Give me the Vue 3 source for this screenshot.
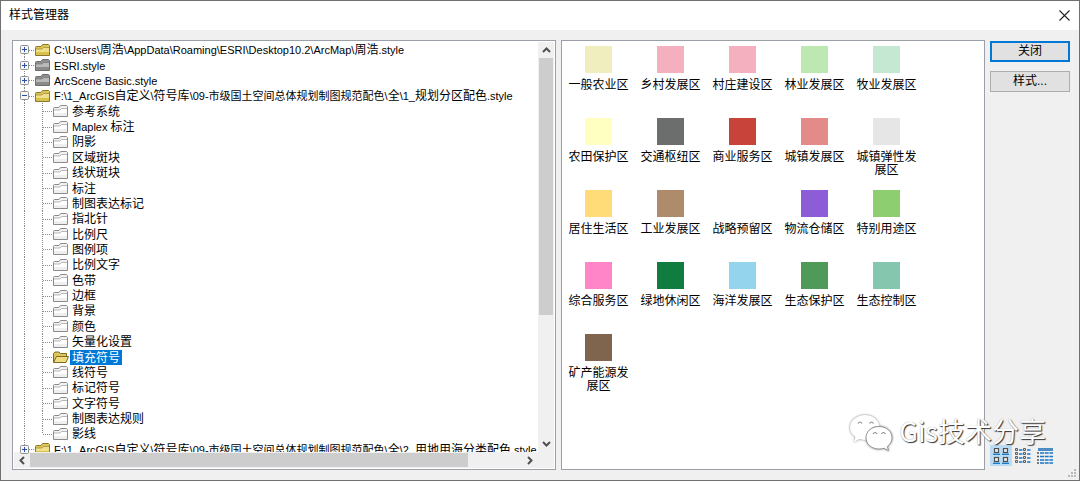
<script setup>
import { ref } from 'vue'

const roots = [
  { label: 'C:\\Users\\周浩\\AppData\\Roaming\\ESRI\\Desktop10.2\\ArcMap\\周浩.style', kind: 'gold' },
  { label: 'ESRI.style', kind: 'gray' },
  { label: 'ArcScene Basic.style', kind: 'gray' },
  { label: 'F:\\1_ArcGIS自定义\\符号库\\09-市级国土空间总体规划制图规范配色\\全\\1_规划分区配色.style', kind: 'gold', open: true },
]
const children = [
  '参考系统', 'Maplex 标注', '阴影', '区域斑块', '线状斑块', '标注', '制图表达标记', '指北针',
  '比例尺', '图例项', '比例文字', '色带', '边框', '背景', '颜色', '矢量化设置', '填充符号',
  '线符号', '标记符号', '文字符号', '制图表达规则', '影线',
]
const rows = [
  ...roots.map((r) => ({ ...r, level: 0 })),
  ...children.map((label) => ({ label, level: 1, kind: 'plain' })),
  { label: 'F:\\1_ArcGIS自定义\\符号库\\09-市级国土空间总体规划制图规范配色\\全\\2_用地用海分类配色.style', kind: 'gold', level: 0 },
]
const selected = ref('填充符号')

const folderColors = {
  gold: { line: '#8c7a2c', back: '#dcc65a', front: '#f1e08a', low: '#d9c04c' },
  gray: { line: '#6e6e6e', back: '#8f8f8f', front: '#b9b9b9', low: '#8a8a8a' },
  plain: { line: '#8b8b8b', back: '#f2f2f2', front: '#ffffff', low: '#efefef' },
}

// Latin runs and long Chinese runs are set one size smaller than short Chinese names.
const split = (text) => text.match(/[\u4e00-\u9fff]+|[^\u4e00-\u9fff]+/g)
const isSmall = (part) => !/[\u4e00-\u9fff]/.test(part) || part.length > 10

const symbols = [
  ['一般农业区', '#f0edbe'], ['乡村发展区', '#f4b0bf'], ['村庄建设区', '#f4b0bf'], ['林业发展区', '#bee8b2'], ['牧业发展区', '#c5e8d3'],
  ['农田保护区', '#ffffc2'], ['交通枢纽区', '#6c6e6d'], ['商业服务区', '#c8433a'], ['城镇发展区', '#e38b89'], ['城镇弹性发展区', '#e6e6e6'],
  ['居住生活区', '#ffdc78'], ['工业发展区', '#ae8c6b'], ['战略预留区', '#ffffff'], ['物流仓储区', '#8c5dd6'], ['特别用途区', '#8dce70'],
  ['综合服务区', '#ff85c8'], ['绿地休闲区', '#107c3f'], ['海洋发展区', '#94d4ec'], ['生态保护区', '#4f9a59'], ['生态控制区', '#84c6ae'],
  ['矿产能源发展区', '#7f654e'],
]
</script>

<template>
  <main class="window">
    <header class="titlebar">
      <h1>样式管理器</h1>
      <button class="close" aria-label="关闭窗口">
        <svg width="11" height="11" viewBox="0 0 11 11"><path d="M.5.5l10 10M10.5.5l-10 10" stroke="#222" stroke-width="1.1" /></svg>
      </button>
    </header>

    <div class="body">
      <section class="panel tree-panel">
        <ul class="tree" role="tree">
          <li
            v-for="(row, i) in rows"
            :key="i"
            class="row"
            :class="{ first: i === 0, end: i === rows.length - 1, lastchild: i === rows.length - 2, child: row.level === 1 }"
            role="treeitem"
            @click="selected = row.label"
          >
            <span class="rail">
              <button v-if="row.level === 0" class="toggle" :aria-label="row.open ? '折叠' : '展开'">
                <svg width="9" height="9" viewBox="0 0 9 9">
                  <rect x=".5" y=".5" width="8" height="8" rx="1" fill="#f6f6f6" stroke="#919191" />
                  <path :d="row.open ? 'M2 4.5h5' : 'M2 4.5h5M4.5 2v5'" stroke="#2a4fa8" />
                </svg>
              </button>
            </span>
            <span v-if="row.level === 1" class="rail inner"></span>
            <svg v-if="selected === row.label" class="folder" width="16" height="14" viewBox="0 0 16 14">
              <path d="M.5 12.500V3.500L2 2h4l1.500 1.500H13.500V6" fill="#dcc65a" stroke="#7d6b22" />
              <path d="M.5 12.500L3.500 6.500H15.500L13 12.500Z" fill="#efdc80" stroke="#7d6b22" />
            </svg>
            <svg v-else class="folder" width="16" height="14" viewBox="0 0 16 14">
              <path d="M.5 12.500V4.500Q.5 3.500 1.500 3.500H6L7.500 1.500H13.500L14.500 2.500V12.500Z" :fill="folderColors[row.kind].back" :stroke="folderColors[row.kind].line" />
              <path d="M1 6H7L8.500 4.500H14V9H1Z" :fill="folderColors[row.kind].front" />
              <path d="M1 9H14V12H1Z" :fill="folderColors[row.kind].low" />
              <path d="M1 6H7L8.500 4.500H14" fill="none" :stroke="folderColors[row.kind].line" stroke-width=".6" />
            </svg>
            <span class="label" :class="{ on: selected === row.label }"><span v-for="(part, k) in split(row.label)" :key="k" :class="{ small: isSmall(part) }">{{ part }}</span></span>
          </li>
        </ul>
        <div class="vbar">
          <button aria-label="向上滚动"><svg width="9" height="6" viewBox="0 0 9 6"><path d="M1 5l3.500-3.500L8 5" /></svg></button>
          <div class="track"><div class="thumb"></div></div>
          <button aria-label="向下滚动"><svg width="9" height="6" viewBox="0 0 9 6"><path d="M1 1l3.500 3.500L8 1" /></svg></button>
        </div>
        <div class="hbar">
          <button aria-label="向左滚动"><svg width="6" height="9" viewBox="0 0 6 9"><path d="M5 1L1.500 4.500L5 8" /></svg></button>
          <div class="track"><div class="thumb"></div></div>
          <button aria-label="向右滚动"><svg width="6" height="9" viewBox="0 0 6 9"><path d="M1 1l3.500 3.500L1 8" /></svg></button>
        </div>
      </section>

      <section class="panel symbols">
        <figure v-for="[name, color] in symbols" :key="name">
          <span class="swatch" :style="{ background: color }"></span>
          <figcaption>{{ name }}</figcaption>
        </figure>
      </section>

      <aside>
        <button class="btn primary">关闭</button>
        <button class="btn">样式...</button>
        <div class="views">
          <button class="view on" aria-label="大图标">
            <svg width="16" height="16" viewBox="0 0 16 16">
              <g v-for="p in [[1, 0], [10, 0], [1, 9], [10, 9]]" :key="p.join()" :transform="`translate(${p[0]} ${p[1]})`">
                <rect x=".5" y=".5" width="4" height="4" fill="#eee" stroke="#505050" stroke-width="1.200" />
                <path d="M-1 6.300h7" stroke="#1676c8" stroke-width="1.300" />
              </g>
            </svg>
          </button>
          <button class="view" aria-label="列表">
            <svg width="16" height="16" viewBox="0 0 16 16">
              <g v-for="y in [0, 4, 8, 12]" :key="y">
                <path :d="`M.500 ${y + .5}h2v2h-2zM8.500 ${y + .5}h2v2h-2z`" fill="#ddd" stroke="#5c5c5c" />
                <path :d="`M4 ${y + 2}h3.500M12 ${y + 2}h3.500`" stroke="#1676c8" stroke-width="1.300" />
              </g>
            </svg>
          </button>
          <button class="view" aria-label="详细信息">
            <svg width="16" height="16" viewBox="0 0 16 16">
              <path d="M1 1.500h15" stroke="#4b8cc4" stroke-width="3" />
              <path d="M0 5h2M0 8.500h2M0 12h2M0 15h2" stroke="#555" stroke-width="1.500" />
              <path d="M3 5h13M3 8.500h13M3 12h13M3 15h13" stroke="#1676c8" stroke-width="1.500" stroke-dasharray="4 .7" />
            </svg>
          </button>
        </div>
      </aside>
    </div>

    <svg class="grip" width="9" height="9" viewBox="0 0 9 9"><path d="M6 0h2v2h-2zM3 3h2v2h-2zM6 3h2v2h-2zM0 6h2v2h-2zM3 6h2v2h-2zM6 6h2v2h-2z" fill="#b8b8b8" /></svg>

    <div class="watermark">
      <svg width="44" height="38" viewBox="0 0 44 38">
        <path d="M16 1C7.500 1 1 6.800 1 13.500c0 4 2 7.200 5.300 9.500L5 28l5.500-3c2 .6 4 .9 6.200.9C16 18 22 12 30.500 12 29.500 5.500 23.500 1 16 1Z" fill="#fff" />
        <path d="M30 12.500c-7.500 0-13 5-13 11.200S22.500 35 30 35c1.800 0 3.400-.3 5-.8l4.500 2.500-1.200-4.200c3-2.200 4.700-5.200 4.700-8.800 0-6.200-5.500-11.200-13-11.200Z" fill="#fff" stroke="#888" stroke-width=".8" />
        <path d="M9 9.500q2-3 4 0M20.500 9.500q2-3 4 0M24 20q2-3 4 0M32.500 20q2-3 4 0" fill="none" stroke="#888" stroke-width="1.200" />
      </svg>
      <span>Gis技术分享</span>
    </div>
  </main>
</template>

<style>
body { margin: 0; }
</style>

<style scoped>
* { box-sizing: border-box; }
.window {
  position: relative;
  display: flex;
  flex-direction: column;
  height: 100vh;
  border: 1px solid #707070;
  background: #f0f0f0;
  color: #000;
  font: 12px/13px "Liberation Sans", "Noto Sans CJK SC", sans-serif;
}
button { padding: 0; border: 0; background: none; font: inherit; color: inherit; }
svg { display: block; flex: none; }
.titlebar {
  display: flex;
  align-items: center;
  justify-content: space-between;
  flex: none;
  height: 29px;
  padding: 0 9px 0 8px;
  background: #fff;
}
h1 { margin: 0; font-size: 12px; font-weight: 400; }
.body {
  flex: 1;
  min-height: 0;
  display: grid;
  grid-template-columns: 545fr 424fr 80px;
  gap: 5px;
  padding: 10px 9px 10px 11px;
}
.panel { min-width: 0; min-height: 0; border: 1px solid #9b9fa8; background: #fff; overflow: hidden; }
.tree-panel {
  display: grid;
  grid-template: "tree v" minmax(0, 1fr) "h h" 16px / minmax(0, 1fr) 16px;
  padding: 1px;
}
.tree {
  grid-area: tree;
  display: grid;
  grid-template-rows: repeat(27, 1fr);
  height: 415px;
  margin: 0;
  padding: 0 0 0 1px;
  list-style: none;
}
.row { display: flex; align-items: center; min-width: 0; white-space: nowrap; }
.rail { position: relative; align-self: stretch; display: flex; align-items: center; flex: none; width: 20px; padding-left: 5px; }
.rail::before {
  content: "";
  position: absolute;
  left: 9px;
  top: 0;
  bottom: 0;
  width: 1px;
  background: repeating-linear-gradient(#8a8a8a 0 1px, #fff 1px 2px);
}
.first .rail::before { top: 50%; }
.end .rail::before { bottom: 50%; }
.rail::after {
  content: "";
  position: absolute;
  left: 14px;
  right: 1px;
  top: 50%;
  height: 1px;
  background: repeating-linear-gradient(90deg, #8a8a8a 0 1px, #fff 1px 2px);
}
.child .rail:first-child::after { display: none; }
.inner { width: 18px; }
.inner::before { left: 7px; }
.inner::after { left: 8px; }
.lastchild .inner::before { bottom: 50%; }
.toggle { position: relative; z-index: 1; }
.label { margin-left: 1px; padding: 2px 2px 0; }
.small { font-size: 11px; }
.on { background: #0078d7; color: #fff; }
.vbar { grid-area: v; display: flex; flex-direction: column; background: #f0f0f0; }
.hbar { grid-area: h; display: flex; padding-right: 16px; background: #f0f0f0; }
.vbar button, .hbar button { display: grid; place-items: center; flex: none; width: 16px; height: 16px; }
.vbar path, .hbar path { fill: none; stroke: #505050; stroke-width: 2; }
.track { flex: 1; min-width: 0; min-height: 0; }
.thumb { background: #cdcdcd; }
.vbar .thumb { width: 14px; height: 68%; margin: 0 auto; }
.hbar .thumb { width: 89%; height: 14px; margin: 1px 0; }
.symbols {
  display: grid;
  grid-template-columns: repeat(auto-fill, 72px);
  grid-auto-rows: 72px;
}
figure { display: flex; flex-direction: column; align-items: center; gap: 6px; margin: 0; padding-top: 5px; }
.swatch { width: 27px; height: 27px; flex: none; }
figcaption { width: 60px; text-align: center; }
aside { display: flex; flex-direction: column; gap: 9px; padding: 1px 0 4px; }
.btn { height: 21px; border: 1px solid #adadad; background: #e1e1e1; }
.primary { border: 2px solid #0078d7; }
.views { display: flex; margin-top: auto; }
.view { display: grid; place-items: center; width: 22px; height: 21px; }
.view.on { background: #b9dcf4; }
.grip { position: absolute; right: 2px; bottom: 2px; }
.watermark {
  position: absolute;
  right: 33px;
  bottom: 28px;
  display: flex;
  align-items: center;
  gap: 6px;
  color: #fff;
  font: 27px/34px "Noto Sans CJK SC", sans-serif;
  text-shadow: 1px 1px 1px #333, 0 0 1px #999;
  pointer-events: none;
}
.watermark span { padding-bottom: 4px; }
.watermark svg { filter: drop-shadow(0 0 1px #777); }
</style>
